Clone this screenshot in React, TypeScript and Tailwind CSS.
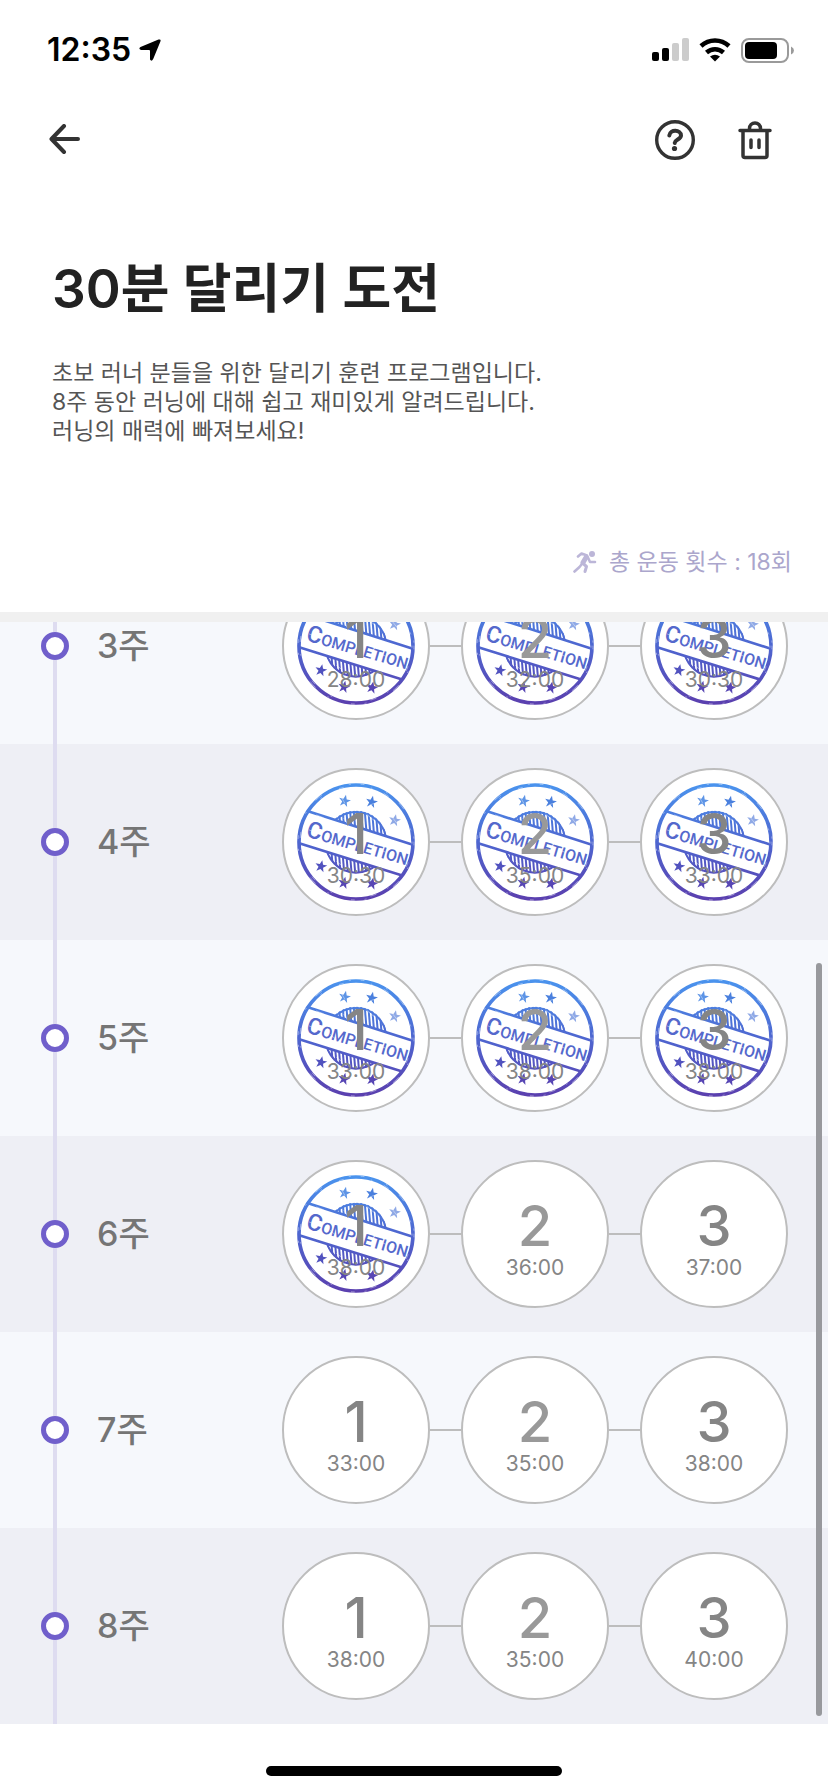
import { useId } from 'react';

interface Session {
  order: number;
  duration: string;
  completed: boolean;
}

interface Week {
  week: number;
  sessions: Session[];
}

/** Build the three sessions of a week; the first `done` of them carry a stamp. */
const createWeek = (week: number, durations: string[], done: number): Week => ({
  week,
  sessions: durations.map((duration, index) => ({
    order: index + 1,
    duration,
    completed: index < done,
  })),
});

const WEEKS: Week[] = [
  createWeek(3, ['28:00', '32:00', '30:30'], 3),
  createWeek(4, ['30:30', '35:00', '33:00'], 3),
  createWeek(5, ['33:00', '38:00', '38:00'], 3),
  createWeek(6, ['38:00', '36:00', '37:00'], 1),
  createWeek(7, ['33:00', '35:00', '38:00'], 0),
  createWeek(8, ['38:00', '35:00', '40:00'], 0),
];

const STAMP_STARS = [
  { x: 224, y: 138, color: '#5d94e6' },
  { x: 305, y: 141, color: '#4a80de' },
  { x: 374, y: 196, color: '#8fa9e6' },
  { x: 153, y: 334, color: '#5152bf' },
  { x: 222, y: 384, color: '#5746b4' },
  { x: 306, y: 386, color: '#5746b4' },
];

const STAR_POINTS = '0,-19 5,-6 18,-6 7,3 11,16 0,8 -11,16 -7,3 -18,-6 -5,-6';

/** Rubber stamp laid under the session number. */
function CompletionStamp() {
  const id = useId();
  const ink = `url(#${id}-ink)`;

  return (
    <svg viewBox="78 81 360 360" className="absolute inset-3 size-[120px]" aria-hidden="true">
      <defs>
        <linearGradient id={`${id}-ink`} gradientUnits="userSpaceOnUse" x1="258" y1="85" x2="258" y2="437">
          <stop offset="0" stopColor="#4a94ee" />
          <stop offset="0.5" stopColor="#4e66d0" />
          <stop offset="1" stopColor="#5b3fae" />
        </linearGradient>
        <clipPath id={`${id}-disc`}>
          <circle cx="258" cy="261" r="94" />
        </clipPath>
        <clipPath id={`${id}-ring`}>
          <circle cx="258" cy="261" r="172" />
        </clipPath>
      </defs>

      {/* Hatched inner disc */}
      <circle cx="258" cy="262" r="91" fill="none" stroke={ink} strokeWidth="6" />
      <g clipPath={`url(#${id}-disc)`} stroke={ink} strokeWidth="6">
        {Array.from({ length: 19 }, (_, i) => (
          <line key={i} x1={152 + i * 11} y1="165" x2={168 + i * 11} y2="358" />
        ))}
      </g>

      {/* Banner */}
      <g clipPath={`url(#${id}-ring)`}>
        <path d="M93 162 443 272 423 370 73 260Z" fill="#fff" />
        <path d="M93 162 443 274M73 260 423 370" fill="none" stroke={ink} strokeWidth="8" />
      </g>

      <circle cx="258" cy="261" r="171" fill="none" stroke={ink} strokeWidth="11" />

      {STAMP_STARS.map(({ x, y, color }) => (
        <polygon key={`${x}-${y}`} points={STAR_POINTS} transform={`translate(${x} ${y}) rotate(12)`} fill={color} />
      ))}

      <text
        transform="translate(106 244) rotate(16)"
        fill="#5468cc"
        fontSize="48"
        className="font-['Roboto'] font-medium"
      >
        <tspan fontSize="70">C</tspan>OMPLETION
      </text>

      {/* Worn ink */}
      <g fill="none" stroke="#fff" strokeOpacity="0.4" strokeWidth="3" strokeLinecap="round">
        <circle cx="258" cy="261" r="174" strokeDasharray="9 71 3 47 22 90 4 32" />
        <circle cx="258" cy="261" r="168" strokeDasharray="4 60 12 85 2 39 16 120" />
        <path d="M366 186l14 18M216 130l8 14M300 150l10-4M290 178l22 18M222 190l10 16M200 320l14 10M320 250l40 10M140 180l20 8M118 225l14 6M180 250l12 10M330 285l16 6" />
      </g>
    </svg>
  );
}

function StatusBar() {
  return (
    <div className="flex h-[100px] items-center justify-between pr-[34px] pl-[47px]">
      <div className="flex items-center gap-2">
        <span className="text-[32px] leading-10 font-semibold text-black">12:35</span>
        <svg viewBox="0 0 22 22" className="size-[22px]" aria-hidden="true">
          <path d="M19.500.6Q22.300-.3 21.400 2.500L14.200 20Q12.500 23 11 20.500V12Q11 11 10 11H2Q-1 10 1.500 8Z" />
        </svg>
      </div>
      <div className="flex items-center gap-[10px]">
        <svg viewBox="0 0 37 24" className="h-6 w-[37px]" aria-hidden="true">
          <rect x="0" y="14" width="7" height="9" rx="2" />
          <rect x="10" y="10" width="7" height="13" rx="2" />
          <rect x="20" y="5" width="7" height="18" rx="2" fill="#ccc" />
          <rect x="30" y="0" width="7" height="23" rx="2" fill="#ccc" />
        </svg>
        <svg viewBox="0 0 32 24" className="h-6 w-8" fill="none" stroke="#000" strokeWidth="4.500" aria-hidden="true">
          <path d="M2 8C10 .5 22 .5 30 8M7.500 14.500C12.500 10 19.500 10 24.500 14.500" />
          <path d="M11 18.500Q16 15 21 18.500L16 23.500Z" fill="#000" stroke="none" />
        </svg>
        <svg viewBox="0 0 53 25" className="h-[25px] w-[53px]" aria-hidden="true">
          <rect x="1" y="1" width="46" height="23" rx="7" fill="none" stroke="#9a9a9a" strokeWidth="2" />
          <rect x="4" y="4" width="32" height="17" rx="4" />
          <path d="M50 8.500Q53 10 53 12.500T50 16.500Z" fill="#9a9a9a" />
        </svg>
      </div>
    </div>
  );
}

function Toolbar() {
  return (
    <nav className="flex h-20 items-center justify-between pr-[53px] pl-11">
      <button type="button" aria-label="뒤로" className="flex size-10 items-center justify-center">
        <svg viewBox="0 0 32 32" className="size-8" fill="none" stroke="#333" strokeWidth="4" strokeLinecap="round" strokeLinejoin="round" aria-hidden="true">
          <path d="M30 15H4M16 2 3.500 15 16 28" />
        </svg>
      </button>
      <div className="flex items-center gap-10">
        <button type="button" aria-label="도움말" className="flex size-10 items-center justify-center">
          <svg viewBox="0 0 40 40" className="size-10" fill="none" stroke="#333" aria-hidden="true">
            <circle cx="20" cy="20" r="18.300" strokeWidth="3.400" />
            <path d="M14.300 15.500C15 9 26 9.500 26 15.500c0 4-6 4-6.300 7.500" strokeWidth="4" strokeLinecap="round" />
            <circle cx="19.500" cy="28.500" r="2.600" fill="#333" stroke="none" />
          </svg>
        </button>
        <button type="button" aria-label="삭제" className="flex size-10 items-center justify-center">
          <svg viewBox="0 0 40 40" className="size-10" fill="none" stroke="#333" strokeWidth="3.500" strokeLinecap="round" strokeLinejoin="round" aria-hidden="true">
            <path d="M5 10.500h30M8 10.500V35.500q0 2 2 2h20q2 0 2-2V10.500M14.500 9.500v-1a5.500 5.500 0 0 1 11 0v1M16 20v7.500M24 20v7.500" />
          </svg>
        </button>
      </div>
    </nav>
  );
}

function RunnerIcon() {
  return (
    <svg viewBox="0 0 24 24" className="size-6" fill="none" stroke="#bcb6d8" strokeWidth="2.600" strokeLinecap="round" strokeLinejoin="round" aria-hidden="true">
      <circle cx="19" cy="4" r="3" fill="#bcb6d8" stroke="none" />
      <path d="M5 6.500 8.500 3.500 14 5.500 17 12H22M8.500 14.500 6.500 17 1.500 21.500" />
      <path d="M13 7.500 10 12.500" strokeWidth="5" />
      <path d="M9.500 13 13.500 16.500 12 21.500" strokeWidth="3" />
    </svg>
  );
}

function SessionCircle({ week, session }: { week: number; session: Session }) {
  return (
    <button
      type="button"
      aria-label={`${week}주 ${session.order}회 ${session.duration}`}
      className="relative flex size-[148px] flex-col items-center rounded-full border-2 border-[#bdbdbd] bg-white pt-[34px]"
    >
      {session.completed && <CompletionStamp />}
      <span
        className={
          session.order === 2
            ? 'relative text-[56px] leading-[60px] font-medium text-[#999]'
            : 'relative text-[56px] leading-[60px] font-medium text-[#858585]'
        }
      >
        {session.order}
      </span>
      <span className="relative text-[21px] leading-6 text-[#858585]">{session.duration}</span>
    </button>
  );
}

function WeekRow({ week, sessions }: Week) {
  return (
    <li className="flex h-[196px] shrink-0 items-center pr-10 pl-[41px] odd:bg-[#f6f8fc] even:bg-[#eeeff5]">
      <div className="flex w-7 flex-col items-center self-stretch">
        <span className="w-1 flex-1 bg-[#dedcf0]" />
        <span className="size-7 rounded-full border-[5px] border-[#705fcb] bg-white" />
        <span className="w-1 flex-1 bg-[#dedcf0]" />
      </div>
      <h2 className="ml-7 flex-1 text-[34px] leading-10 font-medium text-[#757575]">{week}주</h2>
      <div className="flex items-center">
        {sessions.map((session, index) => (
          <div key={session.order} className="flex items-center">
            {index > 0 && <span className="h-[2px] w-[31px] bg-[#bdbdbd]" />}
            <SessionCircle week={week} session={session} />
          </div>
        ))}
      </div>
    </li>
  );
}

export default function App() {
  return (
    <main className="flex min-h-screen flex-col bg-white font-['Inter','Noto_Sans_CJK_KR',sans-serif]">
      <StatusBar />
      <Toolbar />

      <header className="flex flex-col pt-[73px]">
        <h1 className="px-[52px] text-[53px] leading-[72px] font-semibold text-[#222]">30분 달리기 도전</h1>
        <p className="mt-[34px] px-[52px] text-[23px] leading-[29px] text-[#555]">
          초보 러너 분들을 위한 달리기 훈련 프로그램입니다.
          <br />
          8주 동안 러닝에 대해 쉽고 재미있게 알려드립니다.
          <br />
          러닝의 매력에 빠져보세요!
        </p>
        <div className="mt-[100px] flex items-center justify-end gap-3 pr-9 pb-[34px]">
          <RunnerIcon />
          <span className="text-[23px] leading-8 text-[#aba6cc]">총 운동 횟수 : 18회</span>
        </div>
      </header>

      {/* Scrolled to the end, so the oldest visible week is cut at the top */}
      <section className="relative border-t-[10px] border-[#f0f0f0]">
        <ul className="flex h-[1102px] flex-col justify-end overflow-hidden">
          {WEEKS.map((item) => (
            <WeekRow key={item.week} {...item} />
          ))}
        </ul>
        <span className="absolute right-[6px] bottom-2 h-[753px] w-[6px] rounded-full bg-[#98999d]" />
      </section>

      <footer className="flex justify-center pt-[42px] pb-4">
        <span className="h-[10px] w-[296px] rounded-full bg-black" />
      </footer>
    </main>
  );
}
